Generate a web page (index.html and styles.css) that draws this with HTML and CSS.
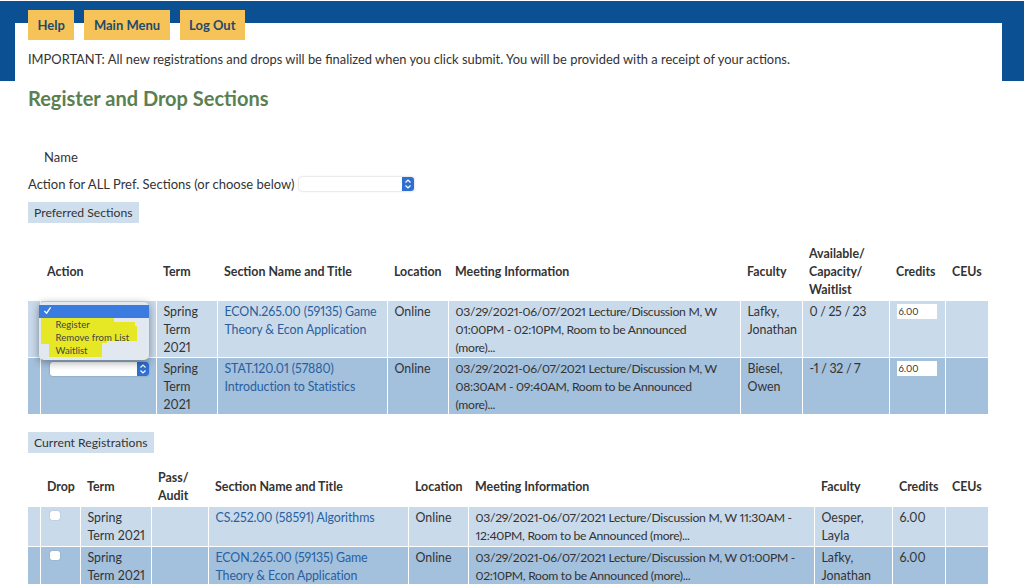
FILE: index.html
```html
<!DOCTYPE html>
<html lang="en">
<head>
    <meta charset="UTF-8">
    <meta name="viewport" content="width=device-width, initial-scale=1.0">
    <title>Register and Drop Sections</title>
    <link rel="stylesheet" href="styles.css">
</head>
<body>
    <div class="band">
        <div class="panel">
            <nav class="tabs">
                <a class="tab" href="#">Help</a>
                <a class="tab" href="#">Main Menu</a>
                <a class="tab" href="#">Log Out</a>
            </nav>
            <p class="notice">IMPORTANT: All new registrations and drops will be finalized when you click submit. You will be provided with a receipt of your actions.</p>
        </div>
    </div>

    <div class="content">
        <h1>Register and Drop Sections</h1>
        <div class="name-row">Name</div>
        <div class="action-row">
            <span>Action for ALL Pref. Sections (or choose below)</span>
            <div class="select select-all"><span class="stepper"><svg viewBox="0 0 8 12" width="8" height="12"><path d="M1.5 4.5 4 2l2.5 2.5M1.5 7.5 4 10l2.5-2.5" fill="none" stroke="#fff" stroke-width="1.2"/></svg></span></div>
        </div>
        <div class="tag tag-pref">Preferred Sections</div>

        <table class="grid grid-pref">
            <colgroup>
                <col style="width:12px"><col style="width:116px"><col style="width:61px"><col style="width:170px"><col style="width:61px"><col style="width:292px"><col style="width:62px"><col style="width:87px"><col style="width:56px"><col style="width:43px">
            </colgroup>
            <thead>
                <tr>
                    <th></th><th>Action</th><th>Term</th><th>Section Name and Title</th><th>Location</th><th>Meeting Information</th><th>Faculty</th><th>Available/<br>Capacity/<br>Waitlist</th><th>Credits</th><th>CEUs</th>
                </tr>
            </thead>
            <tbody>
                <tr class="row-light">
                    <td></td>
                    <td class="action-cell">
                        <div class="popup">
                            <svg class="marker" viewBox="0 0 110 57" width="110" height="57"><path d="M2 16H75V20H96V24H98V39H68V41H63V55H10V42H2Z" fill="#e6e826"/></svg>
                            <div class="option option-on"><svg viewBox="0 0 10 10" width="9" height="9"><path d="M1.5 5.5 4 8l4.5-6.5" fill="none" stroke="#fff" stroke-width="1.4"/></svg></div>
                            <div class="option">Register</div>
                            <div class="option">Remove from List</div>
                            <div class="option">Waitlist</div>
                        </div>
                    </td>
                    <td>Spring Term 2021</td>
                    <td><a href="#">ECON.265.00 (59135) Game Theory &amp; Econ Application</a></td>
                    <td>Online</td>
                    <td class="meeting">03/29/2021-06/07/2021 Lecture/Discussion M, W 01:00PM - 02:10PM, Room to be Announced (more)...</td>
                    <td>Lafky, Jonathan</td>
                    <td class="counts">0 / 25 / 23</td>
                    <td><div class="credit-input">6.00</div></td>
                    <td></td>
                </tr>
                <tr class="row-dark">
                    <td></td>
                    <td class="action-cell">
                        <div class="select select-row"><span class="stepper"><svg viewBox="0 0 8 12" width="8" height="12"><path d="M1.5 4.5 4 2l2.5 2.5M1.5 7.5 4 10l2.5-2.5" fill="none" stroke="#fff" stroke-width="1.2"/></svg></span></div>
                    </td>
                    <td>Spring Term 2021</td>
                    <td><a href="#">STAT.120.01 (57880) Introduction to Statistics</a></td>
                    <td>Online</td>
                    <td class="meeting">03/29/2021-06/07/2021 Lecture/Discussion M, W 08:30AM - 09:40AM, Room to be Announced (more)...</td>
                    <td>Biesel, Owen</td>
                    <td class="counts">-1 / 32 / 7</td>
                    <td><div class="credit-input">6.00</div></td>
                    <td></td>
                </tr>
            </tbody>
        </table>

        <div class="tag tag-current">Current Registrations</div>

        <table class="grid grid-current">
            <colgroup>
                <col style="width:12px"><col style="width:40px"><col style="width:71px"><col style="width:57px"><col style="width:200px"><col style="width:60px"><col style="width:346px"><col style="width:78px"><col style="width:53px"><col style="width:43px">
            </colgroup>
            <thead>
                <tr>
                    <th></th><th>Drop</th><th>Term</th><th>Pass/<br>Audit</th><th>Section Name and Title</th><th>Location</th><th>Meeting Information</th><th>Faculty</th><th>Credits</th><th>CEUs</th>
                </tr>
            </thead>
            <tbody>
                <tr class="row-light">
                    <td></td>
                    <td><div class="check"></div></td>
                    <td>Spring Term 2021</td>
                    <td></td>
                    <td><a href="#">CS.252.00 (58591) Algorithms</a></td>
                    <td>Online</td>
                    <td class="meeting">03/29/2021-06/07/2021 Lecture/Discussion M, W 11:30AM - 12:40PM, Room to be Announced (more)...</td>
                    <td>Oesper, Layla</td>
                    <td>6.00</td>
                    <td></td>
                </tr>
                <tr class="row-dark">
                    <td></td>
                    <td><div class="check"></div></td>
                    <td>Spring Term 2021</td>
                    <td></td>
                    <td><a href="#">ECON.265.00 (59135) Game Theory &amp; Econ Application</a></td>
                    <td>Online</td>
                    <td class="meeting">03/29/2021-06/07/2021 Lecture/Discussion M, W 01:00PM - 02:10PM, Room to be Announced (more)...</td>
                    <td>Lafky, Jonathan</td>
                    <td>6.00</td>
                    <td></td>
                </tr>
            </tbody>
        </table>
    </div>
</body>
</html>
```

FILE: styles.css
```css
* {
    margin: 0;
    padding: 0;
    box-sizing: border-box;
}
html, body {
    height: 100%;
    overflow: hidden;
}
body {
    font-family: Lato, "Liberation Sans", Arial, sans-serif;
    font-size: 13px;
    font-variant-numeric: proportional-nums;
    color: #333;
    background: #fff;
}
.band {
    margin-top: 1px;
    height: 80px;
    padding: 22px 22px 0 15px;
    background: #0b5093;
}
.panel {
    display: flow-root;
    height: 58px;
    padding: 0 13px;
    background: #fff;
}
.tabs {
    display: flex;
    gap: 10px;
    margin-top: -13px;
}
.tab {
    height: 30px;
    line-height: 30px;
    padding: 0 9.5px;
    background: #f6c358;
    color: #1f4a6b;
    font-weight: bold;
    text-decoration: none;
}
.notice {
    margin-top: 10px;
    font-size: 12.9px;
    line-height: 18px;
}
.content {
    padding: 0 36px 0 28px;
}
h1 {
    margin-top: 6px;
    font-size: 20px;
    line-height: 22px;
    color: #5a8052;
}
.name-row {
    margin-top: 39px;
    padding-left: 16px;
    line-height: 18px;
}
.action-row {
    display: flex;
    align-items: center;
    gap: 5px;
    margin-top: 9px;
    height: 18px;
}
.select {
    display: flex;
    justify-content: flex-end;
    height: 14px;
    background: #fff;
    border-radius: 3px;
    box-shadow: 0 0 2px rgba(0, 0, 0, 0.3);
}
.select-all {
    width: 115px;
}
.select-row {
    width: 99px;
    margin: 2px 0 0 2px;
}
.stepper {
    display: flex;
    align-items: center;
    justify-content: center;
    width: 12px;
    background: #2f6fd0;
    border-radius: 0 3px 3px 0;
}
.tag {
    width: max-content;
    height: 21px;
    line-height: 21px;
    padding: 0 6px;
    background: #cfdeec;
    font-size: 12.2px;
}
.tag-pref {
    margin-top: 9px;
}
.tag-current {
    margin-top: 17px;
}
.grid {
    width: 960px;
    table-layout: fixed;
    border-collapse: collapse;
    font-size: 12.4px;
}
.grid-pref {
    margin-top: 16px;
}
.grid-current {
    margin-top: 12px;
}
.grid th {
    padding: 5px 7px 0;
    font-weight: bold;
    line-height: 18px;
    text-align: left;
    vertical-align: middle;
}
.grid-pref thead tr {
    height: 61px;
}
.grid-pref tbody tr {
    height: 57px;
}
.grid-current thead tr {
    height: 42px;
}
.grid-current th {
    padding-top: 3px;
}
.grid-current tbody tr {
    height: 40px;
}
.grid td {
    padding: 2px 3px 0 7px;
    line-height: 18px;
    vertical-align: top;
    border: 1px solid #fff;
}
.grid-pref .meeting {
    padding-right: 20px;
}
.grid tr > td:first-child {
    border-left: none;
}
.grid tr > td:last-child {
    border-right: none;
}
.row-light {
    background: #c9daeb;
}
.row-dark {
    background: #a3c0dd;
}
.grid a {
    color: #2a5f9e;
    letter-spacing: -0.1px;
    text-decoration: none;
}
.meeting {
    font-size: 12.2px;
    letter-spacing: -0.3px;
}
.counts {
    letter-spacing: -0.3px;
}
.action-cell {
    position: relative;
}
.popup {
    position: absolute;
    left: -2px;
    top: 1px;
    width: 110px;
    height: 58px;
    padding-top: 3px;
    background: #e2e8ef;
    border-radius: 5px;
    box-shadow: 0 2px 8px rgba(0, 0, 0, 0.4);
    font-size: 9.6px;
    color: #444;
    z-index: 2;
}
.marker {
    position: absolute;
    left: 0;
    top: 0;
}
.option {
    position: relative;
    height: 13px;
    line-height: 13px;
    padding-left: 17px;
}
.option-on {
    height: 13px;
    padding-left: 4px;
    background: #3a7be0;
}
.credit-input {
    width: 40px;
    height: 15px;
    margin-top: 1px;
    padding-left: 2px;
    background: #fff;
    font-size: 9.5px;
    line-height: 15px;
}
.check {
    width: 10px;
    height: 9px;
    margin: 2px 0 0 2px;
    background: #fff;
    border-radius: 2px;
    box-shadow: 0 0 1px rgba(0, 0, 0, 0.4);
}
```
